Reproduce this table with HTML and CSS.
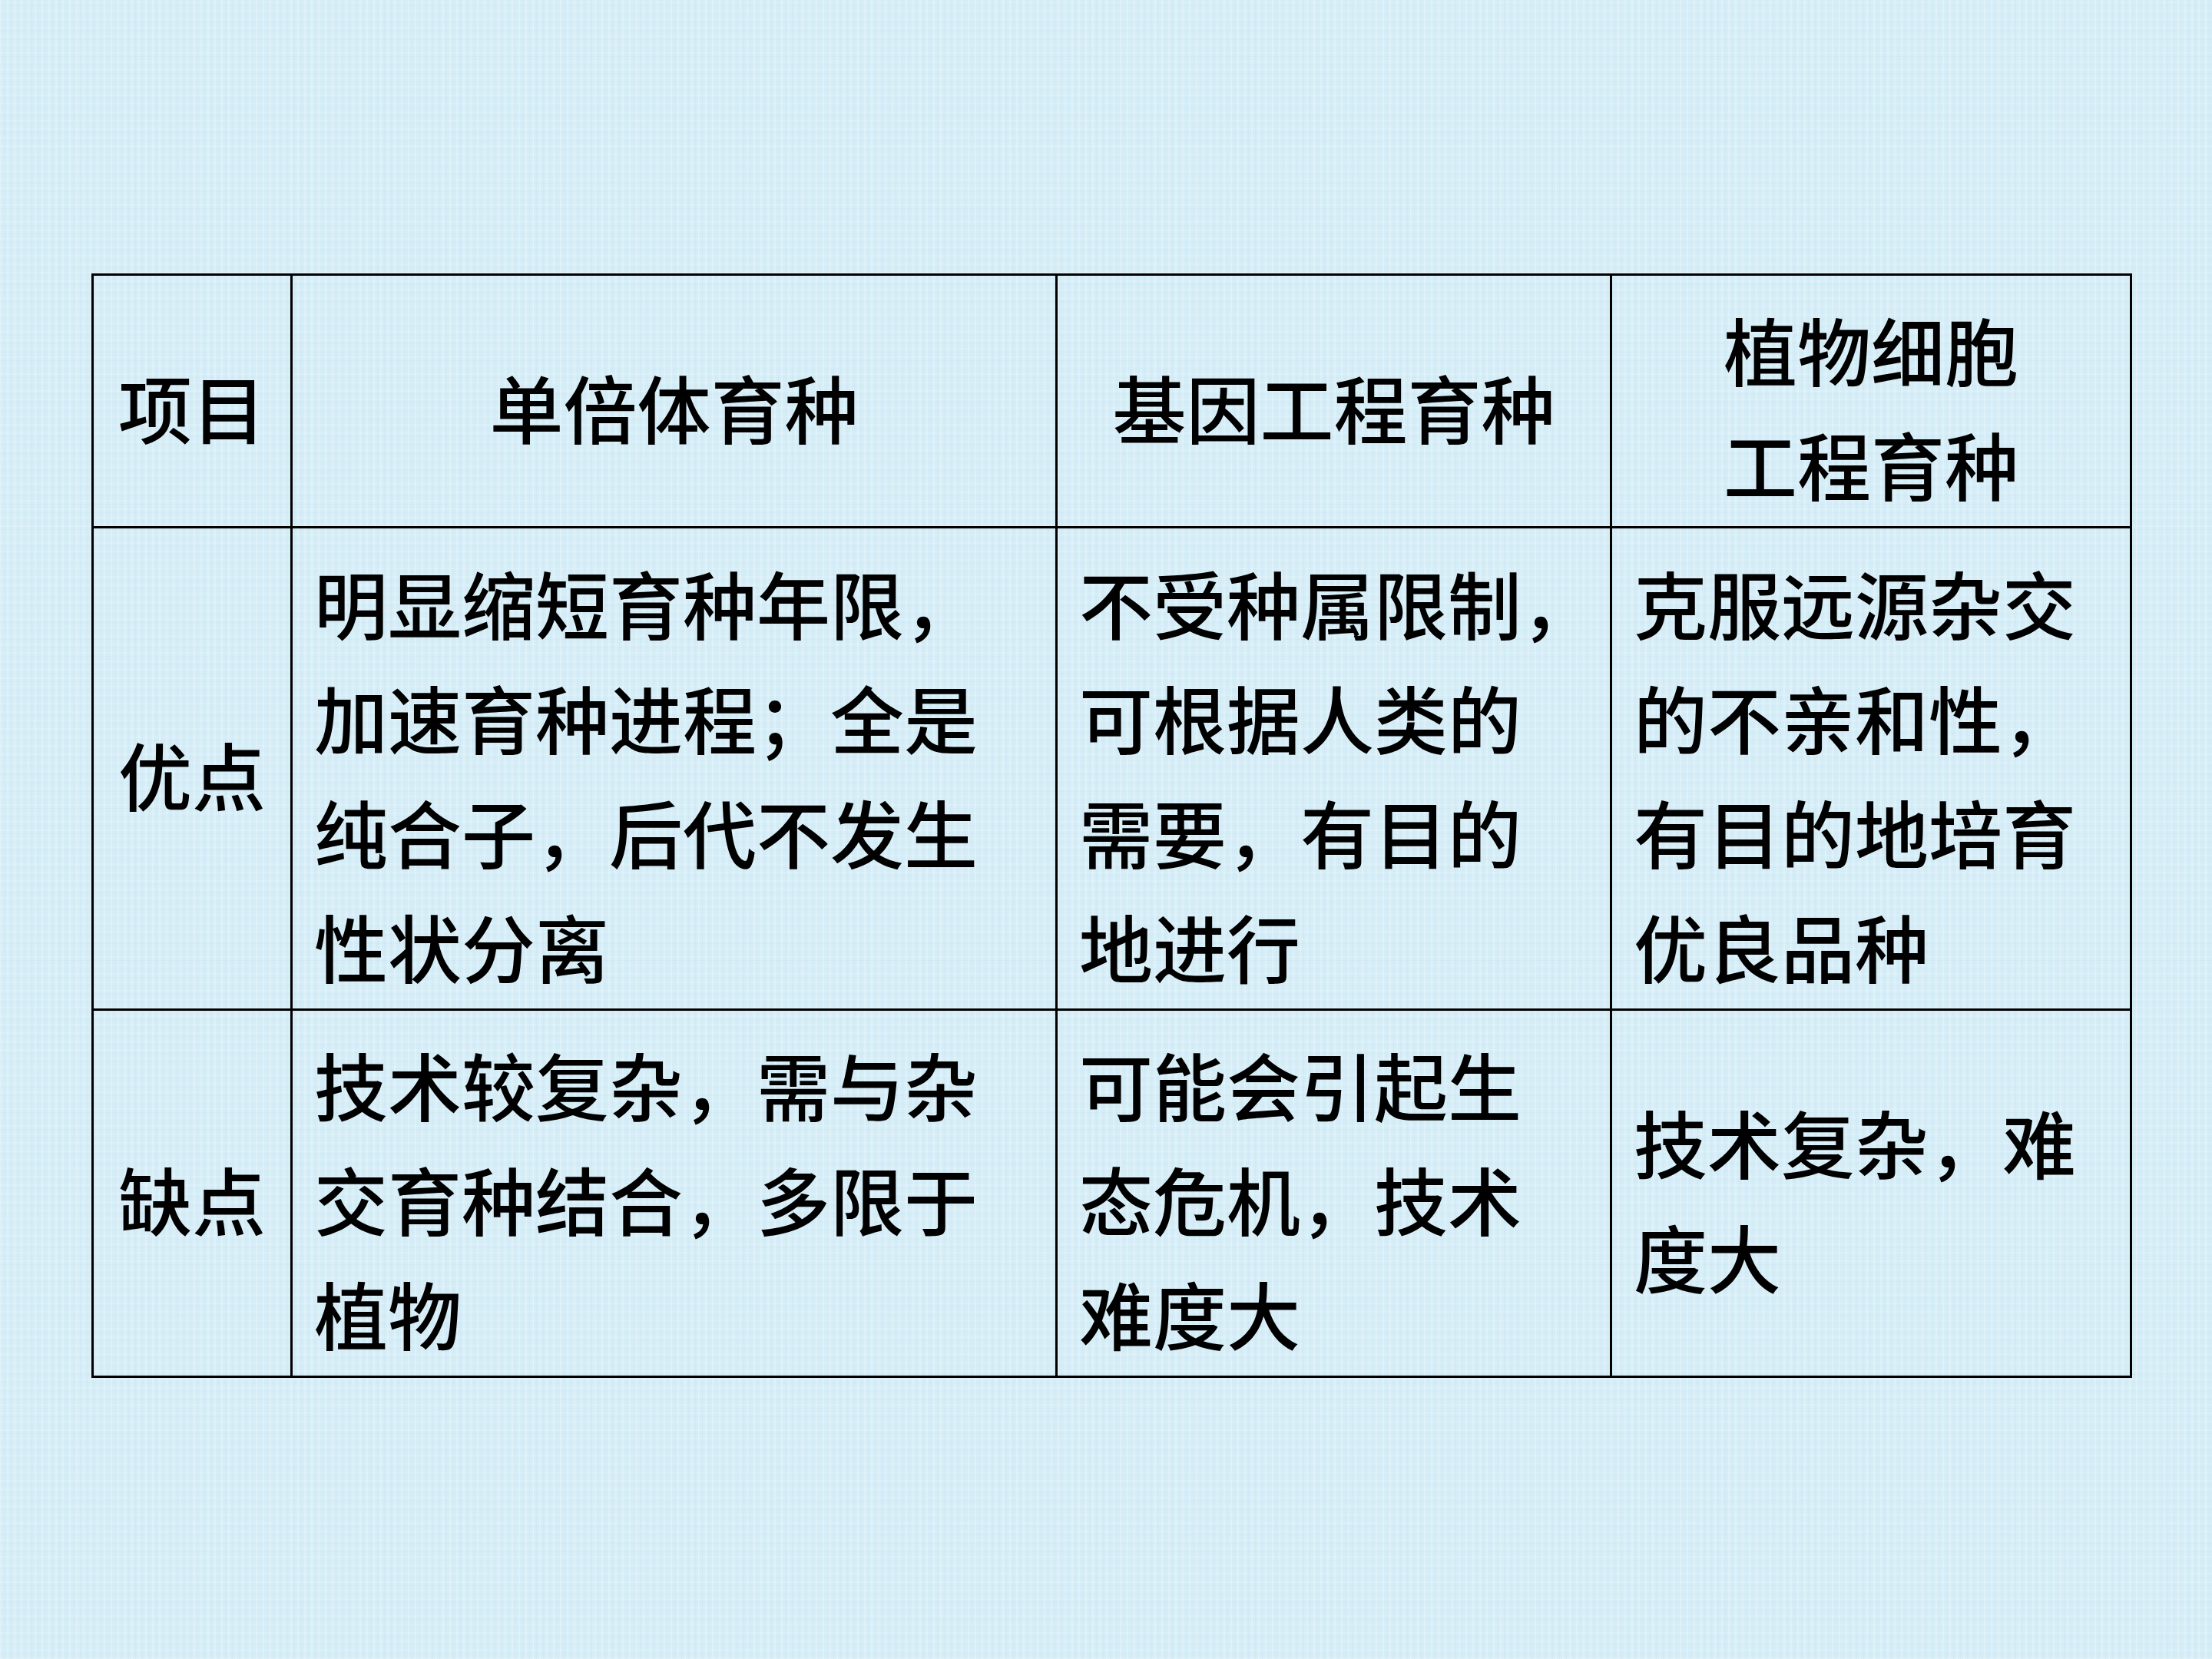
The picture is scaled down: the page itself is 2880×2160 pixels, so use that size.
FILE: index.html
```html
<!DOCTYPE html>
<html lang="zh-CN">
<head>
<meta charset="utf-8">
<title>育种方法比较</title>
<link rel="stylesheet" href="styles.css">
</head>
<body>
<main class="slide">
  <table class="compare">
    <colgroup>
      <col class="c1">
      <col class="c2">
      <col class="c3">
      <col class="c4">
    </colgroup>
    <tr class="head">
      <td class="label">项目</td>
      <td class="center">单倍体育种</td>
      <td class="center">基因工程育种</td>
      <td class="center">植物细胞<br>工程育种</td>
    </tr>
    <tr class="pros">
      <td class="label">优点</td>
      <td>明显缩短育种年限，<br>加速育种进程；全是<br>纯合子，后代不发生<br>性状分离</td>
      <td>不受种属限制，<br>可根据人类的<br>需要，有目的<br>地进行</td>
      <td>克服远源杂交<br>的不亲和性，<br>有目的地培育<br>优良品种</td>
    </tr>
    <tr class="cons">
      <td class="label">缺点</td>
      <td>技术较复杂，需与杂<br>交育种结合，多限于<br>植物</td>
      <td>可能会引起生<br>态危机，技术<br>难度大</td>
      <td>技术复杂，难<br>度大</td>
    </tr>
  </table>
</main>
</body>
</html>
```
FILE: styles.css
```css
html, body {
  margin: 0;
  padding: 0;
}
body {
  width: 2880px;
  height: 2160px;
  background-color: #d5edf7;
  background-image:
    repeating-linear-gradient(90deg, rgba(255,255,255,0.22) 0px, rgba(255,255,255,0.22) 2px, rgba(255,255,255,0) 2px, rgba(255,255,255,0) 5px, rgba(185,212,228,0.14) 5px, rgba(185,212,228,0.14) 6px, rgba(255,255,255,0) 6px, rgba(255,255,255,0) 9px),
    repeating-linear-gradient(0deg, rgba(255,255,255,0.14) 0px, rgba(255,255,255,0.14) 2px, rgba(255,255,255,0) 2px, rgba(255,255,255,0) 7px, rgba(175,205,222,0.10) 7px, rgba(175,205,222,0.10) 8px, rgba(255,255,255,0) 8px, rgba(255,255,255,0) 11px);
  font-family: "Noto Sans CJK SC", "Noto Sans", sans-serif;
  color: #000;
  overflow: hidden;
}
.slide {
  padding: 356px 0 0 119px;
}
.compare {
  border-collapse: collapse;
  table-layout: fixed;
  width: 2654px;
  font-size: 96px;
  font-weight: 500;
  line-height: 149px;
}
.c1 { width: 259px; }
.c2 { width: 996px; }
.c3 { width: 722px; }
.c4 { width: 677px; }
.compare td {
  border: 3px solid #000;
  padding: 12px 0 0 28px;
  vertical-align: middle;
  white-space: nowrap;
  text-align: left;
}
.compare td.label {
  padding-left: 32px;
}
.compare td.center {
  text-align: center;
  padding-left: 0;
}
.head { height: 329px; }
.pros { height: 628px; }
.cons { height: 478px; }
```
